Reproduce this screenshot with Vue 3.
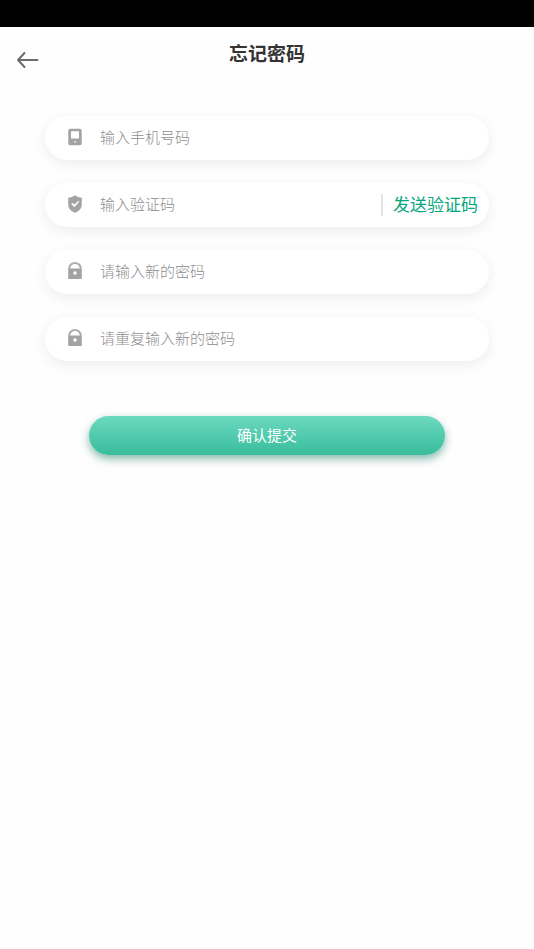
<script setup>
import { reactive } from 'vue'

const form = reactive({ phone: '', code: '', password: '', confirm: '' })

const fields = [
  { key: 'phone', icon: 'phone', type: 'tel', hint: '输入手机号码' },
  { key: 'code', icon: 'shield', type: 'text', hint: '输入验证码' },
  { key: 'password', icon: 'lock', type: 'password', hint: '请输入新的密码' },
  { key: 'confirm', icon: 'lock', type: 'password', hint: '请重复输入新的密码' }
]
</script>

<template>
  <div class="page">
    <div class="status-bar"></div>
    <header class="header">
      <button class="back" type="button" aria-label="返回">
        <svg width="24" height="18" viewBox="0 0 24 18" fill="none" stroke="#6a6a6a" stroke-width="1.9" stroke-linecap="round" stroke-linejoin="round">
          <path d="M2 9H21.5M8.5 2L2 9L8.5 16" />
        </svg>
      </button>
      <h1 class="title">忘记密码</h1>
    </header>

    <form class="form" @submit.prevent>
      <div v-for="field in fields" :key="field.key" class="field">
        <label class="icon" :for="field.key" :aria-label="field.hint">
          <svg v-if="field.icon === 'phone'" width="14" height="18" viewBox="0 0 14 18">
            <path fill="#a3a3a3" fill-rule="evenodd" d="M2 .7H12Q13.7 .7 13.7 2.4V15.6Q13.7 17.3 12 17.3H2Q.3 17.3 .3 15.6V2.4Q.3 .7 2 .7ZM3.6 3.3Q3 3.3 3 3.9V10Q3 10.6 3.6 10.6H10.4Q11 10.6 11 10V3.9Q11 3.3 10.4 3.3Z" />
            <circle cx="7" cy="13.9" r="1.2" fill="#d4d4d4" />
          </svg>
          <svg v-else-if="field.icon === 'shield'" width="14" height="18" viewBox="0 0 14 18">
            <path fill="#a3a3a3" d="M7 .3Q9.8 2.4 13.8 2.7V9.4C13.8 13.7 10.5 16.3 7 17.7C3.5 16.3 .2 13.7 .2 9.4V2.7Q4.2 2.4 7 .3Z" />
            <path fill="#fff" d="M3.2 9L4.4 8.1L6.2 9.6L10.7 5.8L11.3 6.4L6.4 12.2Z" />
          </svg>
          <svg v-else width="14" height="18" viewBox="0 0 14 18">
            <path fill="none" stroke="#acacac" stroke-width="2" d="M1.3 7V6.4A5.7 5.4 0 0 1 12.7 6.4V7" />
            <path fill="#a3a3a3" d="M1 6.4H13Q13.8 6.4 13.8 7.2V16.2Q13.8 17 13 17H1Q.2 17 .2 16.2V7.2Q.2 6.4 1 6.4Z" />
            <circle cx="7" cy="11" r="1.7" fill="#fff" />
          </svg>
        </label>
        <input :id="field.key" v-model="form[field.key]" class="input" :type="field.type" :placeholder="field.hint" />
        <button v-if="field.key === 'code'" class="send" type="button">发送验证码</button>
      </div>
      <button class="submit" type="submit">确认提交</button>
    </form>
  </div>
</template>

<style>
body {
  background: #fefefe;
}
</style>

<style scoped>
.page {
  font-family: "Noto Sans CJK SC", "Noto Sans", sans-serif;
}

button,
input {
  font-family: inherit;
  margin: 0;
  padding: 0;
  border: 0;
  background: none;
}

button {
  cursor: pointer;
}

.status-bar {
  height: 27px;
  background: #000;
}

.header {
  display: grid;
  grid-template-columns: 56px 1fr 56px;
  height: 52px;
}

.back {
  display: flex;
  align-items: center;
  justify-content: center;
  padding-top: 14px;
}

.title {
  margin: 0;
  font-size: 19px;
  line-height: 52px;
  font-weight: 700;
  text-align: center;
  color: #333;
}

.form {
  display: flex;
  flex-direction: column;
  gap: 23px;
  padding: 37px 45px;
}

.field {
  display: flex;
  align-items: center;
  height: 44px;
  padding: 0 11px 0 23px;
  border-radius: 22px;
  background: #fff;
  box-shadow: 0 4px 14px rgba(0, 0, 0, 0.07);
}

.icon {
  display: flex;
  width: 32px;
  padding-bottom: 2px;
}

.input {
  flex: 1;
  min-width: 0;
  height: 44px;
  padding-bottom: 4px;
  font-size: 15px;
  color: #333;
  outline: none;
}

.input::placeholder {
  color: #8e8e8e;
  font-weight: 300;
  opacity: 1;
}

.send {
  padding-bottom: 2px;
  padding-left: 10px;
  border-left: 2px solid #e4e4e4;
  font-size: 17px;
  line-height: 20px;
  color: #06a67e;
}

.submit {
  height: 39px;
  margin: 32px 44px 0;
  padding-bottom: 2px;
  border-radius: 20px;
  background: linear-gradient(#6cd9bf, #38bd9c);
  box-shadow: 0 4px 8px rgba(16, 120, 94, 0.5);
  font-size: 15px;
  color: #fff;
}
</style>
